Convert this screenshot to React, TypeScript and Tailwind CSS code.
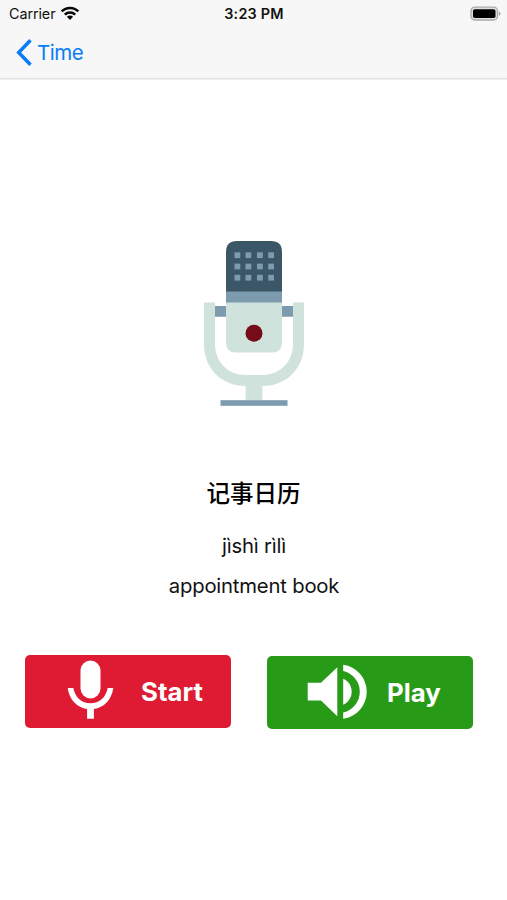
import React from "react";

const columns = [44.5, 55.5, 67, 78.2];
const rows = [22.2, 33.5, 44.7];

function WifiIcon() {
  return (
    <svg className="ml-[5px] h-[15px] w-[20px]" viewBox="0 0 20 15" fill="none" stroke="#080808" strokeWidth="2.5">
      <path d="M1.7 5.4C6.2 .7 13.8 .7 18.3 5.4" />
      <path d="M4.8 8.7C7.6 5.9 12.4 5.9 15.2 8.7" />
      <path d="M6.9 10.8C8.6 9.1 11.4 9.1 13.1 10.8L10 13.9Z" fill="#080808" stroke="none" />
    </svg>
  );
}

function BatteryIcon() {
  return (
    <svg className="h-[16px] w-[31px]" viewBox="0 0 31 16">
      <rect x="1" y="1.2" width="26.5" height="12.8" rx="3.8" fill="#e0e0e0" stroke="#aaa" strokeWidth="1.3" />
      <rect x="3" y="3.2" width="22.5" height="8.8" rx="1.8" fill="#000" />
      <path d="M28.8 5.2Q32.2 7.6 28.8 10Z" fill="#a0a0a0" />
    </svg>
  );
}

function StudioMic() {
  return (
    <svg className="h-[167px] w-[102px]" viewBox="0 0 102 167">
      <path d="M12 66H24V76.7H12ZM79 66H91V76.7H79Z" fill="#7c9bae" />
      <path d="M23 50H79V63H23Z" fill="#7c9bae" />
      <path d="M23 51.5V12Q23 1 34 1H68Q79 1 79 12V51.5Z" fill="#3b5666" />
      <path d="M23 62.5H79V102.5Q79 112.5 69 112.5H33Q23 112.5 23 102.5Z" fill="#cfe2dc" />
      <path
        d="M1 62.5H12V104C12 122 25 135 43 135H59C77 135 90 122 90 104V62.5H101V104C101 128 84 146 59.3 146V160.3H42.7V146C18 146 1 128 1 104Z"
        fill="#cfe2dc"
      />
      {rows.flatMap((y) =>
        columns.map((x) => (
          <rect key={`${x}-${y}`} x={x - 13} y={y - 9.9} width="5.8" height="5.8" fill="#7c9bae" />
        ))
      )}
      <circle cx="51" cy="93.2" r="8.5" fill="#740d19" />
      <rect x="17.5" y="160.2" width="67" height="5.6" fill="#7c9bae" />
    </svg>
  );
}

function MicIcon() {
  return (
    <svg className="mb-[3px] h-[60px] w-[47px]" viewBox="0 0 47 60" fill="#fff">
      <rect x="13.5" y=".5" width="20" height="38" rx="10" />
      <path d="M.7 28H6.3C8.4 38 14.7 43.2 23.5 43.2S38.6 38 40.7 28H46.3C44.5 40.4 36.8 47.5 26.9 49V58.7H20.1V49C10.2 47.5 2.5 40.4.7 28Z" />
    </svg>
  );
}

function SpeakerIcon() {
  return (
    <svg className="h-[56px] w-[61px]" viewBox="0 0 61 56" fill="#fff">
      <path d="M.7 18.7H14L30.3 3.3V52.2L14 36.5H.7ZM36.2 14.8C47.5 19.5 47.5 36 36.2 40.7ZM36.2.8A27.2 27.2 0 0 1 36.2 54.7V48.6A21.4 21.4 0 0 0 36.2 6.9Z" />
    </svg>
  );
}

export default function App() {
  return (
    <main className="flex h-[900px] w-[507px] flex-col overflow-hidden bg-white font-['Inter','Noto_Sans_CJK_SC',sans-serif] text-[#111]">
      <header className="h-[80px] shrink-0 border-b border-[#eeeeee] bg-[#f7f7f7] shadow-[inset_0_-1px_0_#e2e2e2]">
        <div className="grid h-[27px] grid-cols-3 items-center pr-[6px] pl-[9px]">
          <div className="flex items-center">
            <span className="text-[14.4px] leading-[27px] tracking-[-0.1px]">Carrier</span>
            <WifiIcon />
          </div>
          <span className="-ml-[2px] text-center text-[14.4px] leading-[27px] font-semibold tracking-[0.2px]">3:23 PM</span>
          <div className="flex justify-end"><BatteryIcon /></div>
        </div>
        <button className="flex h-[51px] items-center pl-[16px] text-[#087cf9]">
          <svg className="h-[27px] w-[17px]" viewBox="0 0 17 27" fill="none" stroke="currentColor" strokeWidth="3.5">
            <path d="M14.5 1.3L2.7 13.5L14.5 25.7" />
          </svg>
          <span className="mt-px ml-[4px] text-[20.5px] tracking-[-0.5px]">Time</span>
        </button>
      </header>

      <section className="flex flex-col items-center pt-[160px] pr-px pl-[2px]">
        <StudioMic />
        <h1 className="mt-[71px] -ml-px text-[23.5px] leading-[32px] font-medium text-black">记事日历</h1>
        <p className="mt-[22px] text-[20.3px] leading-[28px] tracking-[-0.2px]">jìshì rìlì</p>
        <p className="mt-[12px] text-[20.3px] leading-[28px] tracking-[-0.2px]">appointment book</p>
      </section>

      <div className="mt-[54.5px] flex gap-[36px] pl-[25px] text-white">
        <button className="flex h-[73px] w-[206px] items-center rounded-[5px] bg-[#de1b32] pl-[42px]">
          <MicIcon />
          <span className="mt-[3px] ml-[27px] text-[25.8px] font-bold">Start</span>
        </button>
        <button className="mt-px flex h-[73px] w-[206px] items-center rounded-[5px] bg-[#279b17] pl-[40px]">
          <SpeakerIcon />
          <span className="mt-[3px] ml-[19px] text-[25.8px] font-bold">Play</span>
        </button>
      </div>
    </main>
  );
}
